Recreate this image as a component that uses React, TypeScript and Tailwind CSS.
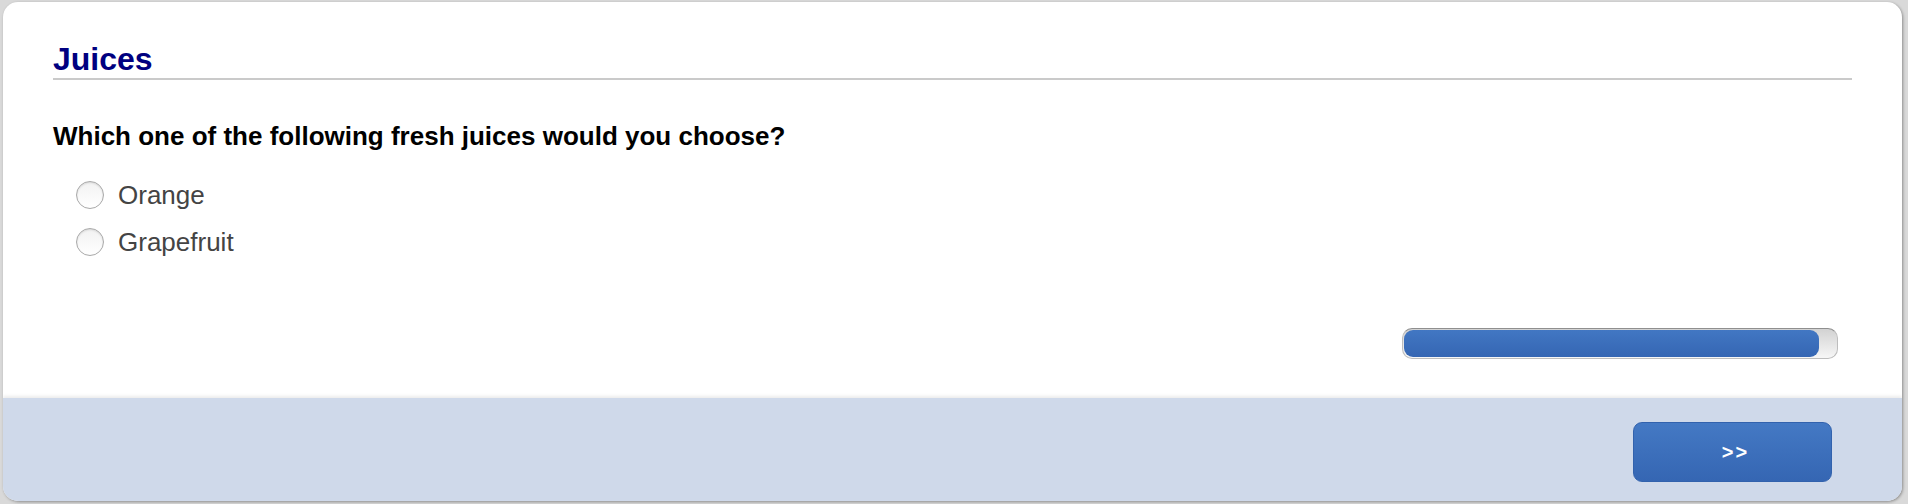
import React, { useState } from 'react';

const options = ['Orange', 'Grapefruit'];

const App: React.FC = () => {
  const [choice, setChoice] = useState<string>('');
  const progress = 96;

  return (
    <div className="w-full h-[504px] bg-[#d9d9d9] pt-[2px] pl-[3px] pr-[6px] pb-[3px] font-['Liberation_Sans',Arial,sans-serif]">
      <div className="h-full flex flex-col bg-white rounded-[15px] overflow-hidden shadow-[1px_1px_3px_rgba(0,0,0,0.35)]">
        <div className="flex-1 flex flex-col px-[50px]">
          <h1 className="mt-[41px] pb-[3px] border-b-2 border-[#cacaca] text-[32px] leading-none font-bold text-[#000080]">
            Juices
          </h1>
          <p className="mt-[43px] text-[26px] leading-none font-bold text-black">
            Which one of the following fresh juices would you choose?
          </p>
          <div className="mt-[26px] flex flex-col gap-[7px]">
            {options.map((opt) => (
              <label key={opt} className="h-[40px] flex items-center cursor-pointer">
                <span
                  onClick={() => setChoice(opt)}
                  className="ml-[23px] w-[28px] h-[28px] rounded-full border border-[#a9a9a9] bg-gradient-to-b from-[#f2f2f2] to-white shadow-[inset_0_1px_2px_rgba(0,0,0,0.12)] flex items-center justify-center"
                >
                  {choice === opt && <span className="w-[12px] h-[12px] rounded-full bg-[#3a6cb9]" />}
                </span>
                <span onClick={() => setChoice(opt)} className="ml-[14px] text-[26px] leading-none text-[#444444]">
                  {opt}
                </span>
              </label>
            ))}
          </div>
          <div className="mt-auto mb-[39px] flex justify-end pr-[14px]">
            <div className="w-[436px] h-[31px] rounded-[10px] border border-[#bdbdbd] border-t-[#8f8f8f] bg-gradient-to-b from-[#d2d2d2] to-[#f7f7f7] p-[1px]">
              <div
                className="h-full rounded-[9px] bg-gradient-to-b from-[#4277c3] to-[#3566b3]"
                style={{ width: `${progress}%` }}
              />
            </div>
          </div>
        </div>
        <div className="h-[103px] bg-[#cfd9ea] shadow-[0_-2px_3px_rgba(0,0,0,0.08)] flex items-start justify-end pt-[24px] pr-[70px]">
          <button className="w-[199px] h-[60px] rounded-[9px] border border-[#3262ad] bg-gradient-to-b from-[#4479c4] to-[#3566b3] text-white text-[20px] font-bold tracking-[2px] pl-[6px] flex items-center justify-center">
            &gt;&gt;
          </button>
        </div>
      </div>
    </div>
  );
};

export default App;
